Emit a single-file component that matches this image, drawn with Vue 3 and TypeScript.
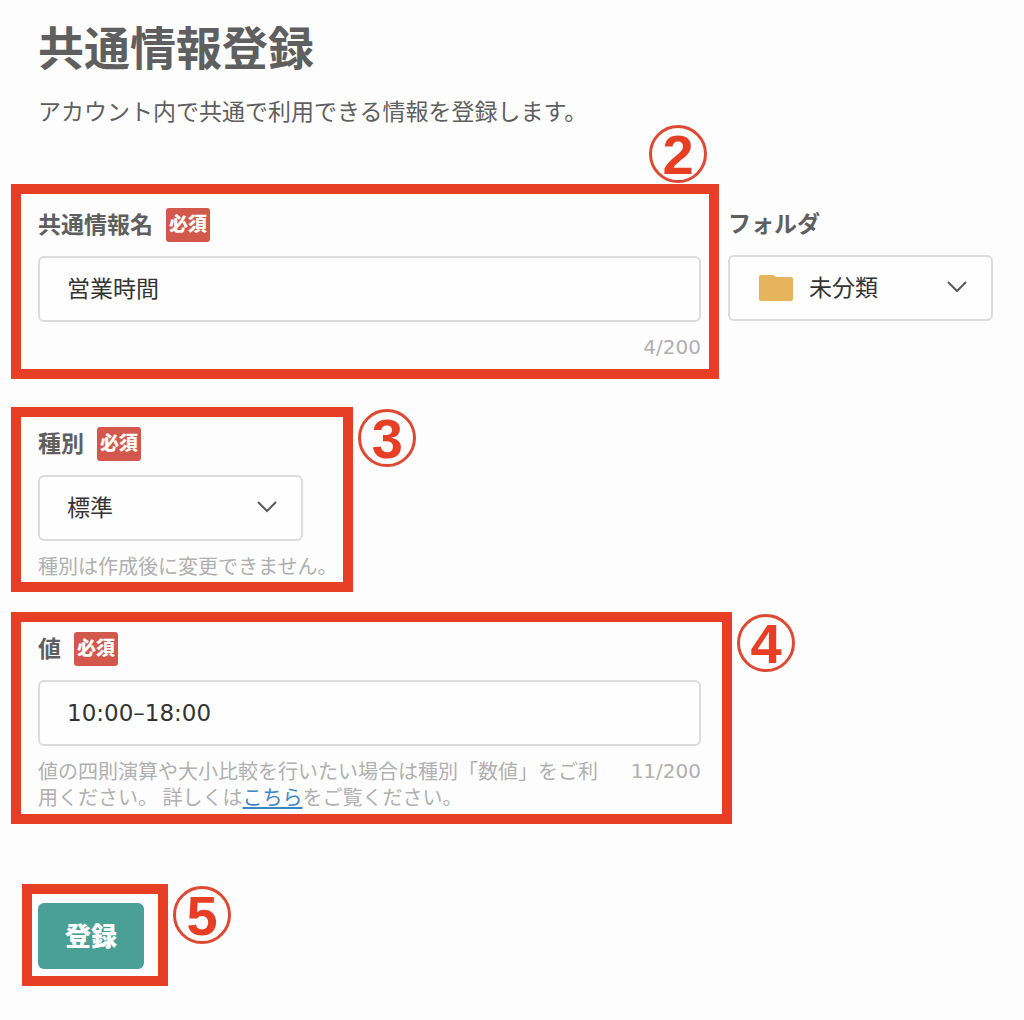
<script setup lang="ts">
import { ref } from 'vue'

const MAX_LENGTH = 200

const name = ref('営業時間')
const folder = ref('未分類')
const kind = ref('標準')
const fieldValue = ref('10:00–18:00')
</script>

<template>
  <main class="page">
    <h1 class="title">共通情報登録</h1>
    <p class="lead">アカウント内で共通で利用できる情報を登録します。</p>

    <form class="form" @submit.prevent>
      <div class="top-row">
        <section class="frame frame-name">
          <span class="step step-above">2</span>
          <div class="label-row">
            <label for="name">共通情報名</label>
            <span class="badge">必須</span>
          </div>
          <input id="name" v-model="name" class="control" type="text" />
          <div class="notes">
            <span class="counter">{{ name.length }}/{{ MAX_LENGTH }}</span>
          </div>
        </section>

        <section class="folder">
          <div class="label-row">
            <label for="folder">フォルダ</label>
          </div>
          <div class="picker">
            <svg class="folder-icon" viewBox="0 0 34 28" aria-hidden="true">
              <path d="M2 1h11q2 0 3 1l1 1h15q2 0 2 2v20q0 2-2 2H2q-2 0-2-2V3q0-2 2-2z" fill="#e6b45c" />
            </svg>
            <select id="folder" v-model="folder" class="control with-icon">
              <option>未分類</option>
            </select>
            <svg class="chevron" viewBox="0 0 20 12" aria-hidden="true">
              <path d="M1 1l9 9 9-9" fill="none" stroke="#5a5a5a" stroke-width="2" />
            </svg>
          </div>
        </section>
      </div>

      <section class="frame frame-kind">
        <span class="step">3</span>
        <div class="label-row">
          <label for="kind">種別</label>
          <span class="badge">必須</span>
        </div>
        <div class="picker">
          <select id="kind" v-model="kind" class="control">
            <option>標準</option>
          </select>
          <svg class="chevron" viewBox="0 0 20 12" aria-hidden="true">
            <path d="M1 1l9 9 9-9" fill="none" stroke="#5a5a5a" stroke-width="2" />
          </svg>
        </div>
        <div class="notes">
          <p class="hint">種別は作成後に変更できません。</p>
        </div>
      </section>

      <section class="frame frame-value">
        <span class="step">4</span>
        <div class="label-row">
          <label for="value">値</label>
          <span class="badge">必須</span>
        </div>
        <input id="value" v-model="fieldValue" class="control numeric" type="text" />
        <div class="notes">
          <p class="hint">
            値の四則演算や大小比較を行いたい場合は種別「数値」をご利用ください。 詳しくは<a href="#">こちら</a>をご覧ください。
          </p>
          <span class="counter">{{ fieldValue.length }}/{{ MAX_LENGTH }}</span>
        </div>
      </section>

      <div class="frame frame-submit">
        <span class="step">5</span>
        <button class="submit" type="submit">登録</button>
      </div>
    </form>
  </main>
</template>

<style>
body {
  background: #fdfdfd;
}
</style>

<style scoped>
.page,
.page * {
  box-sizing: border-box;
}

.page {
  padding: 11px 31px 34px 11px;
  color: #5f5f5f;
  font-family: 'Noto Sans CJK JP', sans-serif;
}

.title {
  margin: 0;
  padding-left: 27px;
  font-size: 46px;
  line-height: 68px;
  font-weight: 700;
}

.lead {
  margin: 13px 0 56px;
  padding-left: 27px;
  font-size: 23px;
  line-height: 36px;
}

.form {
  display: flex;
  flex-direction: column;
  align-items: flex-start;
}

.top-row {
  display: flex;
  align-items: flex-start;
  gap: 9px;
  align-self: stretch;
}

.frame {
  position: relative;
  border: 10px solid #e63f25;
}

.frame-name {
  flex: 1;
  padding: 14px 8px 9px 17px;
}

.frame-kind {
  margin-top: 28px;
  padding: 10px 6px 3px 17px;
}

.frame-value {
  align-self: stretch;
  margin: 20px 261px 0 0;
  padding: 10px 21px 4px 17px;
}

.frame-submit {
  margin: 60px 0 0 11px;
  padding: 9px 14px 7px 6px;
}

.folder {
  flex: 0 0 265px;
  padding-top: 23px;
}

.step {
  position: absolute;
  top: -8px;
  left: calc(100% + 15px);
  width: 58px;
  height: 58px;
  border: 3px solid #dc4a33;
  border-radius: 50%;
  color: #e63f25;
  font-family: 'Liberation Sans', sans-serif;
  font-size: 56px;
  line-height: 54px;
  font-weight: 700;
  text-align: center;
}

.step-above {
  top: -69px;
  left: auto;
  right: 2px;
}

.label-row {
  display: flex;
  align-items: center;
  gap: 13px;
  height: 34px;
  margin-bottom: 14px;
  font-size: 23px;
  line-height: 32px;
  font-weight: 700;
}

.label-row label {
  padding-bottom: 4px;
}

.badge {
  width: 44px;
  height: 34px;
  border-radius: 3px;
  background: #d3584c;
  color: #fff;
  font-size: 19px;
  line-height: 30px;
  font-weight: 900;
  text-align: center;
}

.control {
  display: block;
  width: 100%;
  height: 66px;
  margin: 0;
  padding: 0 27px 5px;
  border: 2px solid #dcdcdc;
  border-radius: 6px;
  outline: none;
  background: #fefefe;
  color: #333;
  font-family: inherit;
  font-size: 23px;
  line-height: 34px;
  appearance: none;
}

.numeric {
  padding-bottom: 0;
  font-family: 'DejaVu Sans', 'Noto Sans CJK JP', sans-serif;
}

.with-icon {
  padding-left: 79px;
}

.picker {
  position: relative;
  width: 265px;
}

.folder-icon {
  position: absolute;
  top: 19px;
  left: 31px;
  width: 34px;
  height: 28px;
}

.chevron {
  position: absolute;
  top: 26px;
  right: 26px;
  width: 20px;
  height: 12px;
  pointer-events: none;
}

.notes {
  display: flex;
  justify-content: space-between;
  gap: 24px;
  margin-top: 12px;
  color: #b0b0b0;
  font-size: 20px;
  line-height: 26px;
}

.hint {
  margin: 0;
}

.hint a {
  color: #3b86c4;
  text-underline-offset: 2px;
}

.counter {
  margin-left: auto;
  font-family: 'DejaVu Sans', sans-serif;
}

.submit {
  display: block;
  width: 106px;
  height: 66px;
  padding: 0 0 4px;
  border: 0;
  border-radius: 6px;
  background: #4a9f97;
  color: #fff;
  font-family: inherit;
  font-size: 26px;
  font-weight: 900;
}
</style>
